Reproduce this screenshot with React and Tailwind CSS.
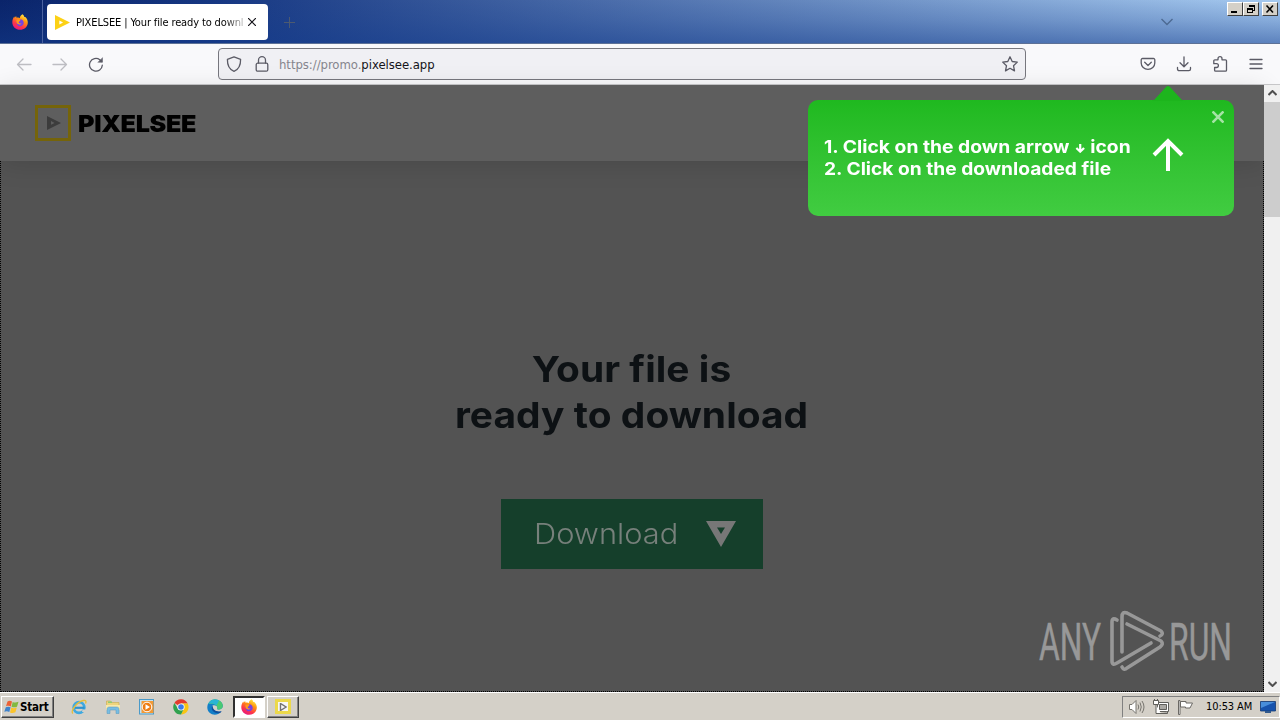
import React from 'react';

const FirefoxIcon = ({ id, className }) => (
  <svg className={className} viewBox="0 0 16 16">
    <defs>
      <linearGradient id={id} x1="0.8" y1="0" x2="0.25" y2="1">
        <stop offset="0" stopColor="#fff44f" />
        <stop offset="0.35" stopColor="#ff980e" />
        <stop offset="0.7" stopColor="#ff3647" />
        <stop offset="1" stopColor="#e31587" />
      </linearGradient>
    </defs>
    <path fill={`url(#${id})`} d="M10.6.3c1 .9 1.5 1.7 1.8 2.7l.9-.1c1.8 1.6 2.7 3.8 2.5 6.1-.4 4-3.7 6.8-7.7 6.8C3.7 15.8.3 12.600.3 8.200.3 6.200 1 4.100 2.300 2.500l.3 1.200L4.100 2l.5 1.700c1.500-.5 2.600-.2 3.300.5C7.700 2.700 8.900 1 10.600.3z" />
    <path fill="#7542e5" d="M8.200 5.200c2 .1 3.500 1.600 3.500 3.600 0 2-1.600 3.500-3.500 3.500-2.100 0-3.600-1.500-3.600-3.400 0-1 .4-1.800 1.200-2.400l1 .7c1.200 0 1.700-.6 1.400-2z" />
    <path fill="#ff9a1b" d="M4.500 5.900c1.200-.7 2.700-.4 3.800.4-.2 1-1.500 1.200-1.600 2-.1.900 1.400 1.600 3 1-1 1.700-3.900 1.700-4.800-.2-.4-.9-.7-2.100-.4-3.200z" />
  </svg>
);

const PlayMark = ({ className }) => (
  <svg className={className} viewBox="0 0 16 16">
    <path fill="currentColor" fillRule="evenodd" d="M0 0L16 8L0 16ZM4.600 5.800V10L8.600 8Z" />
  </svg>
);

const Stroke = ({ className, children }) => (
  <svg className={className} viewBox="0 0 16 16" fill="none" stroke="currentColor" strokeWidth="1.3" strokeLinecap="round" strokeLinejoin="round">
    {children}
  </svg>
);

const WindowButton = ({ children }) => (
  <div className="flex h-[14px] w-4 items-center justify-center border border-t-white border-l-white border-r-[#404040] border-b-[#404040] bg-[#d4d0c8] text-black">
    <svg className="h-[10px] w-3" viewBox="0 0 12 10" fill="none" stroke="currentColor" shapeRendering="crispEdges">
      {children}
    </svg>
  </div>
);

const TitleBar = () => (
  <div className="h-11 border-b border-[#5d7196] bg-[linear-gradient(to_bottom,rgba(20,60,140,0)_0%,rgba(20,60,140,0.2)_45%,rgba(20,60,140,0.5)_100%),linear-gradient(to_right,#0a246a_0%,#163782_17%,#a6caf0_100%)]">
    <div className="flex h-full">
      <div className="flex w-[43px] items-center justify-center border-r border-[#4a62a0] pr-[2px]">
        <FirefoxIcon id="ffTitle" className="h-4 w-4" />
      </div>
      <div className="mt-1 ml-1 flex h-9 w-[221px] items-center rounded bg-white pl-2">
        <PlayMark className="h-[15px] w-[15px] shrink-0 text-[#fcd116]" />
        <div className="mt-[2px] ml-[6px] w-[168px] overflow-hidden whitespace-nowrap text-[11px] tracking-[-0.13px] text-black [mask-image:linear-gradient(to_right,#000_148px,transparent_174px)]">
          PIXELSEE | Your file ready to download
        </div>
        <svg className="ml-1 h-2 w-2 shrink-0" viewBox="0 0 8 8" stroke="#15141a" strokeWidth="1.2">
          <path d="M0 0L8 8M8 0L0 8" />
        </svg>
      </div>
      <svg className="mt-[17px] ml-[16px] h-[11px] w-[11px]" viewBox="0 0 11 11" stroke="#4d5a70">
        <path d="M0 5.500H11M5.500 0V11" />
      </svg>
      <svg className="mt-[18px] ml-[866px] h-2 w-3" viewBox="0 0 12 8" fill="none" stroke="#4d6a92" strokeWidth="1.400">
        <path d="M0.500 1L6 6.500L11.500 1" />
      </svg>
      <div className="mt-[2px] ml-auto flex pr-[2px]">
        <WindowButton><path strokeWidth="2" d="M2 8H8" /></WindowButton>
        <WindowButton>
          <path d="M4 1.500H10M4.500 1V3M9.500 1V6.500H8M2 5H8M2.500 4V9M7.500 4V9M2 8.500H8M4 2H10M2 4.500H8" />
        </WindowButton>
        <div className="ml-[3px]">
          <WindowButton><path shapeRendering="auto" strokeWidth="1.600" d="M2.500 1.500L9 8.500M9 1.500L2.500 8.500" /></WindowButton>
        </div>
      </div>
    </div>
  </div>
);

const Toolbar = () => (
  <div className="flex h-[41px] items-center border-b border-[#c8c8ca] bg-[#f9f9fb] text-[#5b5b66]">
    <div className="flex w-[218px] shrink-0 items-center gap-5 pl-4">
      <Stroke className="h-4 w-4 text-[#bdbdc2]"><path d="M15 8.500H1.500M7 3L1.500 8.500L7 14" /></Stroke>
      <Stroke className="h-4 w-4 text-[#bdbdc2]"><path d="M1 8.500H14.500M9 3L14.500 8.500L9 14" /></Stroke>
      <Stroke className="h-4 w-4">
        <path d="M14.300 9.200A6.400 6.400 0 1 1 11.800 3.700L13.500 5.500" />
        <path d="M14.500 2V6.300H10.200Z" fill="currentColor" strokeWidth="0.500" />
      </Stroke>
    </div>
    <div className="flex h-8 w-[808px] shrink-0 items-center rounded border border-[#77777e] bg-[#f0f0f4] px-[7px]">
      <Stroke className="h-4 w-4"><path d="M8 .8L14.600 3.300C14.700 9 12.600 13.600 8 15.300C3.400 13.600 1.300 9 1.400 3.300Z" /></Stroke>
      <Stroke className="ml-3 h-4 w-4">
        <rect x="2.200" y="7.200" width="11.600" height="8" rx="1.500" />
        <path d="M4.500 7V4.200a3.500 3.500 0 0 1 7 0V7" />
      </Stroke>
      <span className="mt-[2px] ml-[9px] text-[13px] tracking-[-0.05px] text-[#85858d]">
        https://promo.<span className="text-[#15141a]">pixelsee.app</span>
      </span>
      <Stroke className="ml-auto h-4 w-4">
        <path d="M8 .8L10.200 5.500L15.300 6.100L11.500 9.700L12.500 14.900L8 12.300L3.500 14.900L4.500 9.700L.7 6.100L5.800 5.500Z" />
      </Stroke>
    </div>
    <div className="ml-auto flex items-center gap-5 pr-4">
      <Stroke className="h-4 w-4">
        <path d="M2.500 2.500h11a1.300 1.300 0 0 1 1.300 1.300V7a6.800 6.300 0 0 1-13.600 0V3.800a1.300 1.300 0 0 1 1.300-1.300zM4.700 6.300L8 9.500L11.300 6.300" />
      </Stroke>
      <Stroke className="h-4 w-4"><path d="M8 .8V10.500M4 6.800L8 10.800L12 6.800M1.500 11.500V13a1.700 1.700 0 0 0 1.700 1.700h9.600a1.700 1.700 0 0 0 1.700-1.700V11.500" /></Stroke>
      <Stroke className="h-4 w-4">
        <path d="M6 3.800V2.700a2 2 0 0 1 4 0V3.800H13.500a1 1 0 0 1 1 1V14.200a1 1 0 0 1-1 1H3.600a1 1 0 0 1-1-1V11.500H4.500a1.900 1.900 0 0 0 0-3.800H1.800V4.800a1 1 0 0 1 1-1Z" />
      </Stroke>
      <Stroke className="h-4 w-4"><path d="M2 3.500H14M2 8H14M2 12.500H14" /></Stroke>
    </div>
  </div>
);

const DownloadHint = () => (
  <div className="absolute top-[15px] left-[808px] h-[116px] w-[426px] rounded-[10px] bg-gradient-to-b from-[#1fb91f] to-[#41cc41]">
    <svg className="absolute -top-[15px] left-[344px] h-[16px] w-[32px]" viewBox="0 0 32 16">
      <path fill="#1db51d" d="M0 16C1.500 15.500 2 15 3 14L14 2Q16 0 18 2L29 14C30 15 30.500 15.500 32 16Z" />
    </svg>
    <div className="flex pt-9 pl-4 text-white">
      <p className="w-[328px] whitespace-nowrap font-[Inter] text-[17.5px] leading-[22px] font-bold">
        <span className="inline-block origin-left scale-x-[1.102]">
          1. Click on the down arrow
          <svg className="mx-[5px] inline h-[9px] w-[9px]" viewBox="0 0 9 9" fill="none" stroke="currentColor" strokeWidth="2">
            <path d="M4.500 0V7.500M1 4L4.500 7.700L8 4" />
          </svg>
          icon
        </span>
        <br />
        <span className="inline-block origin-left scale-x-[1.096]">2. Click on the downloaded file</span>
      </p>
      <svg className="mt-[2px] h-[34px] w-8" viewBox="0 0 32 34" fill="none" stroke="currentColor" strokeWidth="4">
        <path d="M16 33V3M2 17L16 3L30 17" />
      </svg>
    </div>
    <svg className="absolute top-[11px] right-[10px] h-3 w-3" viewBox="0 0 12 12" stroke="#a5e3a5" strokeWidth="2.600">
      <path d="M0.500 0.500L11.500 11.500M11.500 0.500L0.500 11.500" />
    </svg>
  </div>
);

const Watermark = () => (
  <svg className="absolute top-[520px] left-[1036px] h-[72px] w-[200px]" viewBox="0 0 200 72" fill="none" stroke="#989898" strokeWidth="3.600" strokeLinecap="round" strokeLinejoin="round">
    <g fill="#989898" stroke="#989898" strokeWidth="0.500" fontFamily="Roboto" fontSize="52">
      <text x="3" y="54.500" textLength="62" lengthAdjust="spacingAndGlyphs">ANY</text>
      <text x="133" y="54.500" textLength="63" lengthAdjust="spacingAndGlyphs">RUN</text>
    </g>
    <path d="M81 15Q76 12 76 17V56Q76 61 81 58L115 38" />
    <path d="M86 47V12Q86 6 91 8L125 26Q128 29 124 31M91 19L125 36Q128 39 124 42L91 63Q88 66 86 62" />
  </svg>
);

const Page = () => (
  <div className="relative flex h-[607px] bg-[#535353]">
    <div className="flex w-[1264px] flex-col">
      <header className="flex h-[76px] shrink-0 items-center bg-[#5e5e5e] pl-[35px] shadow-[0_4px_24px_rgba(0,0,0,0.12)]">
        <div className="flex h-9 w-9 items-center justify-center border-[3px] border-[#75640a] pl-[2px]">
          <PlayMark className="h-[16px] w-[14px] text-[#3c3c3c]" />
        </div>
        <span className="mt-[2px] ml-[7px] origin-left scale-x-[1.07] font-[Inter] text-[23.5px] leading-none font-black tracking-[-0.3px] text-black">PIXELSEE</span>
      </header>
      <main className="flex grow flex-col items-center border border-t-0 border-dotted border-black">
        <h1 className="mt-[185px] scale-x-[1.08] text-center font-[Inter] text-[36px] leading-[46px] font-bold tracking-[0.05px] text-[#0d1114]">
          Your file is
          <br />
          ready to download
        </h1>
        <button className="mt-[61px] flex h-[70px] w-[262px] items-center bg-[#153f2b] pl-[33px] text-[#77807b]">
          <span className="w-[172px] text-left">
            <span className="inline-block origin-left scale-x-[1.1] font-[Inter] text-[28px] font-light">Download</span>
          </span>
          <svg className="h-[26px] w-[30px]" viewBox="0 0 30 26">
            <path fill="#777777" fillRule="evenodd" d="M0 0H30L15 26ZM11 6.500L15 13L19 6.500Z" />
          </svg>
        </button>
      </main>
    </div>
    <div className="flex w-4 flex-col items-center bg-[#f0f0f0]">
      <svg className="mt-[5px] h-[6px] w-[9px]" viewBox="0 0 9 6" fill="none" stroke="#505050" strokeWidth="2"><path d="M0.500 5L4.500 1L8.500 5" /></svg>
      <div className="mt-[6px] h-[115px] w-full bg-[#cdcdcd]" />
      <svg className="mt-auto mb-[5px] h-[6px] w-[9px]" viewBox="0 0 9 6" fill="none" stroke="#505050" strokeWidth="2"><path d="M0.500 1L4.500 5L8.500 1" /></svg>
    </div>
    <DownloadHint />
    <Watermark />
  </div>
);

const Taskbar = () => (
  <footer className="flex h-7 items-center border-t border-white bg-[#d4d0c8] text-black">
    <div className="ml-[1px] flex h-[22px] w-[53px] items-center border border-t-white border-l-white border-r-[#404040] border-b-[#404040] pl-[2px] shadow-[inset_-1px_-1px_0_#808080]">
      <svg className="h-4 w-4 shrink-0" viewBox="0 0 16 16">
        <path fill="#ec6135" d="M3.500 2.500C5 1.500 6.500 1.500 8 2.500L6.800 7.500C5 6.600 3.700 6.700 2 7.300Z" />
        <path fill="#82b942" d="M8.700 3C10.500 3.800 12 3.800 14.500 2.800L13 7.700C11 8.500 9.300 8.500 7.500 7.700Z" />
        <path fill="#3f83cc" d="M1.800 8.200C3.500 7.500 5 7.500 6.600 8.300L5.300 13C3.600 12 2 12 .3 12.800Z" />
        <path fill="#fbc42c" d="M7.300 8.600C9 9.400 10.600 9.400 12.800 8.600L11.400 13.300C9.300 14.300 7.700 14.300 6 13.400Z" />
      </svg>
      <span className="mt-[2px] text-[11.5px] font-bold tracking-[-0.2px]">Start</span>
    </div>
    <svg className="ml-[17px] h-4 w-4" viewBox="0 0 16 16" fill="none">
      <circle cx="8" cy="8.500" r="5.300" stroke="#3fa9e0" strokeWidth="2.800" />
      <path d="M4 8.800H13.500" stroke="#2e93d0" strokeWidth="2.200" />
      <path d="M11.500 10.500H15V13H11Z" fill="#d4d0c8" />
      <path d="M2 14.500C-1 13 5 3 12.500 1.500C15 1 15.500 2.500 14.500 4.500" stroke="#e5bd3c" strokeWidth="1.300" />
    </svg>
    <svg className="ml-[18px] h-4 w-4" viewBox="0 0 16 16">
      <path fill="#eed57c" stroke="#c9a94d" strokeWidth=".6" d="M1.500 2H5.500L6.500 3.500H14V10H1.500Z" />
      <path fill="#8fcb73" d="M3 2.500H7V4H3Z" />
      <path fill="#f8e9ab" d="M1 6H15V11H1Z" />
      <path fill="#78bde2" stroke="#5597bf" strokeWidth=".5" d="M2 14.500V10.500C2 8.700 3 8 4.500 8H11.500C13 8 14 8.700 14 10.500V14.500H11V11H5V14.500Z" />
    </svg>
    <svg className="ml-[18px] h-4 w-4" viewBox="0 0 16 16">
      <rect x=".5" y=".5" width="14" height="14.500" fill="#c5e2f2" stroke="#4a9ac9" />
      <rect x="2.500" y="2" width="12" height="12" fill="#f39a36" />
      <circle cx="8" cy="8" r="4.800" fill="#ef7d13" stroke="#fff" />
      <path fill="#fff" d="M6.500 5.200L11 8L6.500 10.800Z" />
    </svg>
    <svg className="ml-[18px] h-4 w-4" viewBox="0 0 16 16">
      <path fill="#e33b2e" d="M8 8L1.400 4A7.600 7.600 0 0 1 14.700 4.500H8Z" />
      <path fill="#f9c513" d="M8 4.500H14.700A7.600 7.600 0 0 1 8 15.600L11 9.500Z" />
      <path fill="#30a14e" d="M1.400 4L5 9.800L11 9.500L8 15.600A7.600 7.600 0 0 1 1.400 4Z" />
      <circle cx="8" cy="8" r="3.600" fill="#fff" />
      <circle cx="8" cy="8" r="2.800" fill="#3b7bea" />
    </svg>
    <svg className="ml-[18px] h-4 w-4" viewBox="0 0 16 16">
      <path fill="#137fc8" d="M.3 8.500C.3 3.800 3.600.4 8 .4C12.500.4 15.800 3.400 15.800 6.800C15.800 9.500 13.500 10.800 11.500 10.600C9.500 10.300 10.700 9.500 10.300 8C9.800 6.300 7.300 5.600 5.500 6.600C5 10.300 8 13 13.800 12.700C9.700 18.300.3 15.600.3 8.500Z" />
      <path fill="#4ac973" d="M7.500.5C12.500.2 15.800 3.400 15.800 6.800C15.800 9.500 13.500 10.800 11.500 10.600C9.500 10.300 10.700 9.500 10.300 8C9.300 5 5 4 1.300 5C2.500 2.200 4.800.6 7.500.5Z" />
      <path fill="#2ab4d5" d="M7.500.5C9.500.4 11 .9 12 1.500L9.500 6.500C7 4.400 4 4.200 1.300 5C2.500 2.200 4.800.6 7.500.5Z" />
      <path fill="#0f4f9c" d="M5.500 6.600C3 11 7 14.800 12.300 14.200C14 13.800 15.500 11.700 13.800 12.300C9 13.300 5.500 10.600 5.500 6.600Z" />
    </svg>
    <div className="ml-[10px] flex h-[22px] w-8 items-center justify-center border-2 border-t-[#303030] border-l-[#303030] border-r-white border-b-white bg-white">
      <FirefoxIcon id="ffTask" className="h-4 w-4" />
    </div>
    <div className="ml-[2px] flex h-[22px] w-8 items-center justify-center border border-t-white border-l-white border-r-[#404040] border-b-[#404040] shadow-[inset_-1px_-1px_0_#808080]">
      <div className="flex h-[15px] w-4 items-center justify-center border-[3px] border-[#ecd94b] bg-[#f7f7f7]">
        <svg className="h-2 w-2" viewBox="0 0 8 8" fill="none" stroke="#737373" strokeWidth="1.400"><path d="M1.500 .5L7 4L1.500 7.500Z" /></svg>
      </div>
    </div>
    <div className="ml-auto flex h-[22px] w-[158px] items-center border border-t-[#808080] border-l-[#808080] border-r-white border-b-white pl-[6px]">
      <svg className="h-4 w-4" viewBox="0 0 16 16" fill="none" stroke="#77756f" strokeWidth="1">
        <path fill="#fff" d="M.5 5.500H3L7 1.500V14.500L3 10.500H.5Z" />
        <path d="M9 5.500Q10.500 8 9 10.500M11 3.500Q13.500 8 11 12.500M13 2Q17 8 13 14" />
      </svg>
      <svg className="ml-2 h-4 w-4" viewBox="0 0 16 16" fill="none" stroke="#5f5e5a">
        <path fill="#fff" d="M4.500 3.500H15.500V12.500H4.500Z" />
        <path fill="#aaa8a3" d="M6.500 5.500H13.500V10.500H6.500ZM6.500 14.500H14.500V12.500" />
        <path fill="#fff" d="M.5 1.500H5.500V5.500H.5ZM1.500 0V1.500M4.500 0V1.500M3 5.500V14.500H8" />
      </svg>
      <svg className="ml-2 h-4 w-4" viewBox="0 0 16 16" stroke="#6b6965">
        <path fill="#fff" d="M1.500 1.500H3V15.500H1.500ZM3.500 2.500H9V4H15.500L13 9H8.500V8H3.500Z" />
      </svg>
      <span className="mt-[2px] ml-[13px] w-[54px] whitespace-nowrap text-[11px] tracking-[-0.1px]">10:53 AM</span>
      <svg className="h-[14px] w-4 shrink-0" viewBox="0 0 16 14">
        <path fill="#1753ad" stroke="#153a72" strokeWidth=".8" d="M.5 1.500H15.500V11H.5Z" />
        <path fill="#488edb" d="M1 2H15L1 8Z" />
        <path fill="#31598c" d="M5 11H11V13H5Z" />
      </svg>
    </div>
  </footer>
);

const App = () => (
  <div className="h-[720px] w-[1280px] overflow-hidden font-['DejaVu_Sans_Condensed','Open_Sans',sans-serif]">
    <TitleBar />
    <Toolbar />
    <Page />
    <Taskbar />
  </div>
);

export default App;
